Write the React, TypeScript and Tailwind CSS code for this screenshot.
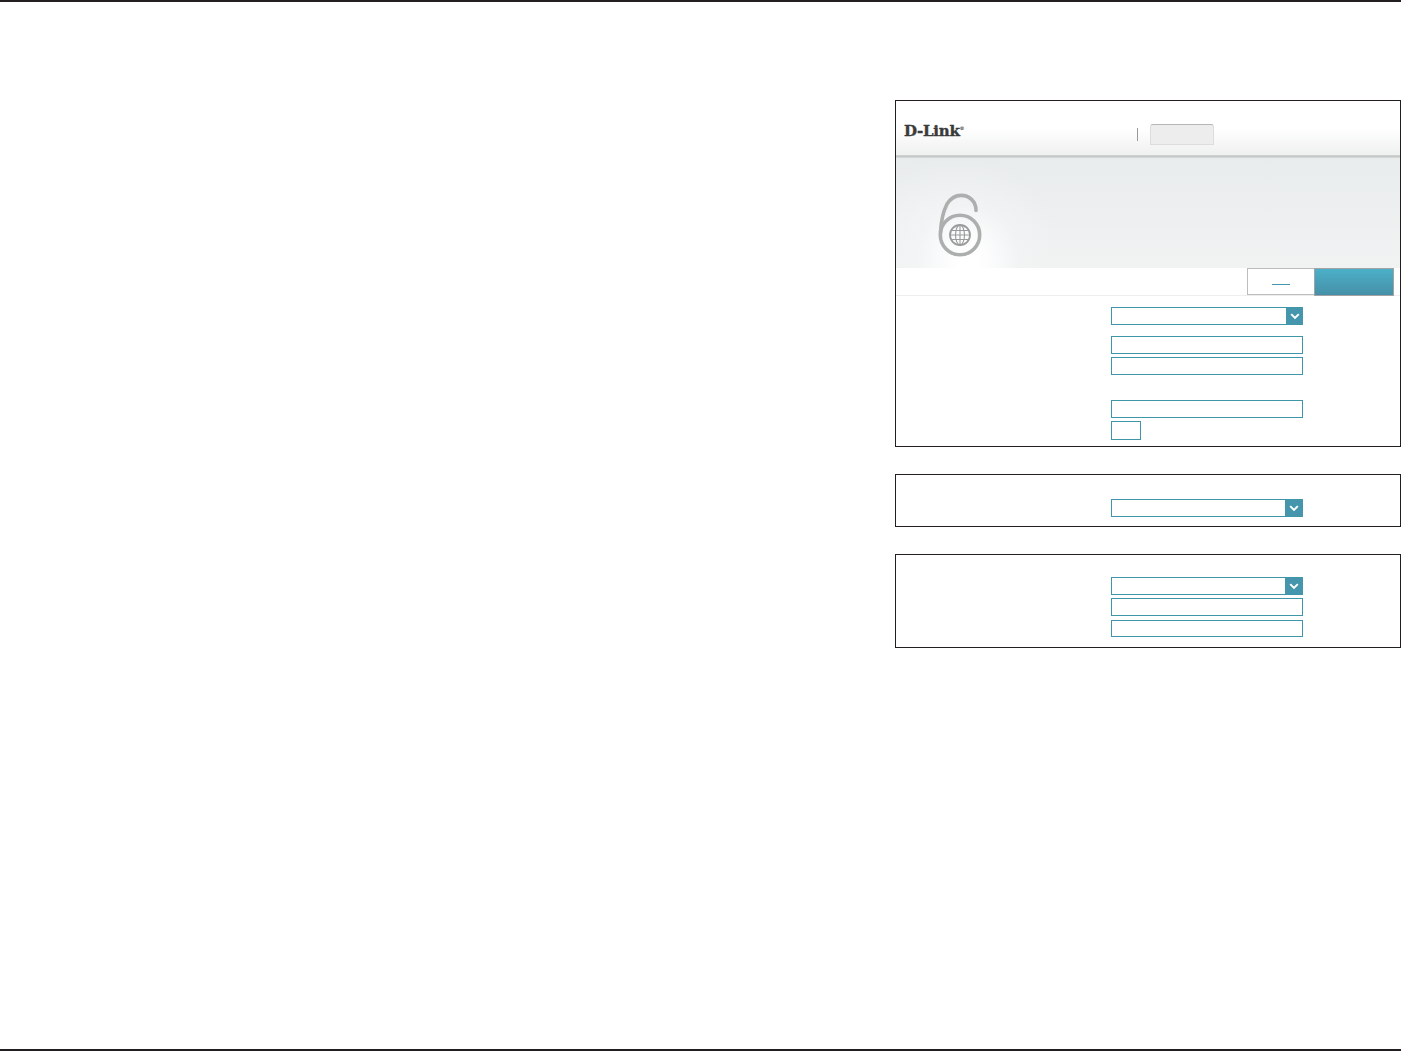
import React from "react";

function Field({ className = "h-[18px]" }: { className?: string }) {
  return <div className={`w-[192px] border border-[#3f96a8] bg-white ${className}`} />;
}

function Select({ arrow = "w-[18px]" }: { arrow?: string }) {
  return (
    <div className="flex h-[18px] w-[192px] justify-end border border-[#3f96a8] bg-white">
      <div className={`-mr-px flex items-center justify-center bg-[#4596ad] ${arrow}`}>
        <svg width="10" height="7" viewBox="0 0 10 7" fill="none">
          <path d="M1.2 1.2 5 5 8.8 1.2" stroke="#fff" strokeWidth="1.9" />
        </svg>
      </div>
    </div>
  );
}

function LockIcon() {
  return (
    <svg width="50" height="66" viewBox="0 0 50 66" fill="none" className="shrink-0">
      <g stroke="#adafaf" strokeWidth="3.6">
        <circle cx="25" cy="43" r="19.7" />
        <path d="M5.6 40C6 29 8 20 12 12 16 6 21 3.4 26 3.4 34 3.4 41 9 41 18.5" strokeLinecap="round" />
      </g>
      <g stroke="#9a9c9c" strokeWidth="1.1" fill="none">
        <circle cx="25" cy="43" r="10" strokeWidth="1.8" />
        <ellipse cx="25" cy="43" rx="4.5" ry="10" />
        <path d="M25 33v20M16 38.5h18M16 47.5h18M15 43h20" />
      </g>
    </svg>
  );
}

export default function App() {
  return (
    <div className="flex h-[1051px] w-[1401px] flex-col bg-white">
      <div className="h-[2px] bg-[#231f20]" />
      <main className="flex-1 pl-[895px] pt-[98px]">
        <section className="h-[347px] w-[506px] border border-[#231f20]">
          <header className="flex h-[54px] items-end bg-gradient-to-b from-white from-50% to-[#eff0f0]">
            <div className="mb-[11px] ml-[8px] w-[233px] font-['DejaVu_Serif',serif] text-[15px] font-bold leading-[20px] tracking-[-0.25px] text-[#3a3a3a] [-webkit-text-stroke:0.4px_#3a3a3a]">
              D-Link<span className="relative -top-[6px] text-[5px] [-webkit-text-stroke:0]">®</span>
            </div>
            <div className="mb-[14px] h-[13px] w-px bg-[#9a9a9a]" />
            <div className="mb-[10px] ml-[12px] h-[21px] w-[64px] rounded-t-[3px] border border-[#dcdddc] border-t-[#b5b6b5] bg-[#ecedec]" />
          </header>
          <div className="h-[3px] bg-gradient-to-b from-[#d3d5d4] via-[#c6c8c7] to-[#dcdfde]" />
          <div className="flex h-[110px] items-end bg-[radial-gradient(ellipse_52px_58px_at_72px_104px,#ffffff_0%,#ffffff_18%,transparent_100%),radial-gradient(ellipse_100px_80px_at_60px_80px,#f4f6f7_0%,transparent_100%),linear-gradient(to_bottom,#e9ecec,#f1f3f3)] pb-[10px] pl-[39px]">
            <LockIcon />
          </div>
          <div className="flex h-[28px] justify-end border-b border-[#eeeeee] pr-[6px]">
            <div className="flex w-[67px] items-end justify-center border border-r-0 border-[#bdbdbd] bg-white pb-[9px]">
              <div className="h-px w-[18px] bg-[#4596ad]" />
            </div>
            <div className="-mb-px w-[80px] border border-[#a3a3a3] bg-gradient-to-b from-[#4bb0c8] to-[#4590a8]" />
          </div>
          <div className="pl-[215px] pt-[11px]">
            <Select arrow="w-[17px]" />
            <Field className="mt-[11px] h-[18px]" />
            <Field className="mt-[3px] h-[18px]" />
            <Field className="mt-[25px] h-[18px]" />
            <div className="mt-[3px] h-[19px] w-[30px] border border-[#3f96a8]" />
          </div>
        </section>
        <section className="mt-[27px] h-[53px] w-[506px] border border-[#231f20] pl-[215px] pt-[24px]">
          <Select />
        </section>
        <section className="mt-[27px] h-[94px] w-[506px] border border-[#231f20] pl-[215px] pt-[22px]">
          <Select />
          <Field className="mt-[3px] h-[18px]" />
          <Field className="mt-[4px] h-[17px]" />
        </section>
      </main>
      <div className="h-[2px] bg-[#231f20]" />
    </div>
  );
}
